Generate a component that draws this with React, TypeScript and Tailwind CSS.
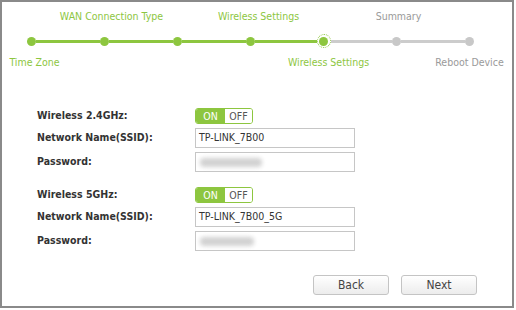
import React from 'react';

const green = 'bg-[#8dc63f]';

type Step = { label: string; top: boolean; done: boolean; shift?: string };

const steps: Step[] = [
  { label: 'Time Zone', top: false, done: true, shift: 'translate-x-[3px]' },
  { label: 'WAN Connection Type', top: true, done: true, shift: 'translate-x-[7px]' },
  { label: '', top: false, done: true },
  { label: 'Wireless Settings', top: true, done: true, shift: 'translate-x-[8px]' },
  { label: 'Wireless Settings', top: false, done: true, shift: 'translate-x-[5px]' },
  { label: 'Summary', top: true, done: false, shift: 'translate-x-[2px]' },
  { label: 'Reboot Device', top: false, done: false },
];

const current = 4;

const Stepper = () => (
  <div className="-ml-[7px] grid grid-cols-[repeat(7,73px)] pt-[7px]">
    {steps.map((s, i) => {
      const leftGreen = i <= current;
      const rightGreen = i < current;
      const textColor = s.done ? 'text-[#8dc63f]' : 'text-[#9a9a9a]';
      return (
        <div key={i} className="flex flex-col">
          <div className={`flex h-[14px] justify-center whitespace-nowrap text-[10.5px] leading-[14px] ${textColor}`}>
            <span className={s.shift}>{s.top ? s.label : ''}</span>
          </div>
          <div className="mt-[11px] flex h-[14px] items-center">
            <div className={`h-[3px] flex-1 ${i === 0 ? '' : leftGreen ? green : 'bg-[#cccccc]'}`} />
            {i === current ? (
              <div className="flex h-[14px] w-[14px] items-center justify-center rounded-full border border-dotted border-[#8dc63f]">
                <div className={`h-[9px] w-[9px] rounded-full ${green}`} />
              </div>
            ) : (
              <div className={`h-[9px] w-[9px] rounded-full ${i < current ? green : 'bg-[#c8c8c8]'}`} />
            )}
            <div className={`h-[3px] flex-1 ${i === 6 ? '' : rightGreen ? green : 'bg-[#cccccc]'}`} />
          </div>
          <div className={`mt-[7px] flex h-[14px] justify-center whitespace-nowrap text-[10.5px] leading-[14px] ${textColor}`}>
            <span className={s.shift}>{!s.top ? s.label : ''}</span>
          </div>
        </div>
      );
    })}
  </div>
);

const Toggle = () => (
  <div className="flex h-[16px] w-[58px] overflow-hidden rounded-[3px] border border-[#8dc63f] text-[10.5px] leading-[14px]">
    <div className={`flex w-[29px] items-center justify-center text-white ${green}`}>ON</div>
    <div className="flex flex-1 items-center justify-center bg-white text-[#555]">OFF</div>
  </div>
);

const Row = ({ label, children }: { label: string; children: React.ReactNode }) => (
  <div className="flex h-[16px] items-center">
    <div className="w-[158px] text-[10.5px] font-bold text-[#333]">{label}</div>
    {children}
  </div>
);

const FieldRow = ({ label, children }: { label: string; children: React.ReactNode }) => (
  <div className="flex h-[20px] items-center">
    <div className="w-[158px] text-[10.5px] font-bold text-[#333]">{label}</div>
    {children}
  </div>
);

const TextBox = ({ value }: { value: string }) => (
  <div className="flex h-[20px] w-[160px] items-center border border-[#c6c6c6] bg-white pl-[3px] text-[10.5px] text-[#333]">
    {value}
  </div>
);

const PasswordBox = ({ w }: { w: string }) => (
  <div className="flex h-[20px] w-[160px] items-center border border-[#c6c6c6] bg-white pl-[4px]">
    <div className={`h-[9px] ${w} rounded-sm bg-[#d2d2d2] blur-[2px]`} />
  </div>
);

const Section = ({ band, ssid, pw }: { band: string; ssid: string; pw: string }) => (
  <div className="flex flex-col gap-[4px]">
    <Row label={band}>
      <Toggle />
    </Row>
    <FieldRow label="Network Name(SSID):">
      <TextBox value={ssid} />
    </FieldRow>
    <FieldRow label="Password:">
      <PasswordBox w={pw} />
    </FieldRow>
  </div>
);

const Btn = ({ text }: { text: string }) => (
  <button className="h-[20px] w-[76px] rounded-[3px] border border-[#c4c4c4] bg-gradient-to-b from-white to-[#ececec] text-[12px] text-[#444]">
    {text}
  </button>
);

export default function App() {
  return (
    <div className="h-[310px] w-[516px] bg-white" style={{ fontFamily: '"DejaVu Sans Condensed", "DejaVu Sans", sans-serif' }}>
      <div className="flex h-[308px] w-[514px] flex-col overflow-hidden border-2 border-[#8a8a8a]">
        <Stepper />
        <div className="ml-[35px] mt-[39px] flex flex-col gap-[15px]">
          <Section band="Wireless 2.4GHz:" ssid="TP-LINK_7B00" pw="w-[62px]" />
          <Section band="Wireless 5GHz:" ssid="TP-LINK_7B00_5G" pw="w-[54px]" />
        </div>
        <div className="mr-[35px] mt-[24px] flex justify-end gap-[12px]">
          <Btn text="Back" />
          <Btn text="Next" />
        </div>
      </div>
    </div>
  );
}
